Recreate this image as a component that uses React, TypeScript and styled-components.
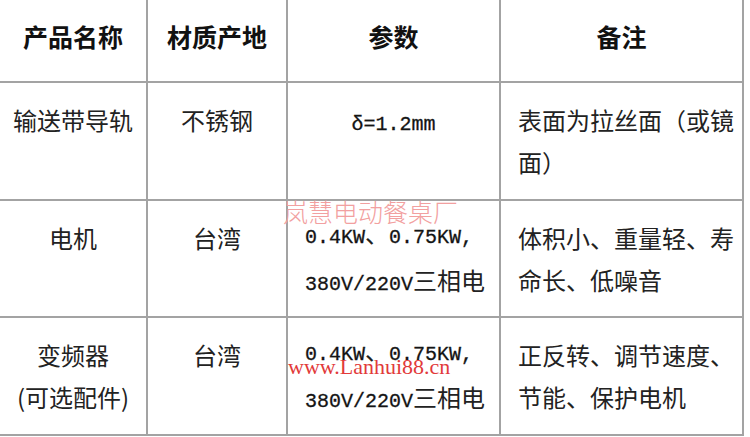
import React from "react";
import styled, { createGlobalStyle } from "styled-components";

const GlobalStyle = createGlobalStyle`
    html, body {
        margin: 0;
        padding: 0;
        background: #ffffff;
    }
    body {
        font-family: "Noto Sans CJK SC", "Noto Sans", sans-serif;
        color: #1e1e1e;
    }
`

const StyledSheet = styled.div`
    position: relative;
    width: 750px;
    height: 437px;
    overflow: hidden;
    background: #ffffff;
`

const StyledRow = styled.div<{ $h: number }>`
    display: grid;
    grid-template-columns: 148px 140px 213px 243px;
    height: ${(p) => p.$h}px;
`

const StyledCell = styled.div<{ $align?: "left" | "center"; $header?: boolean }>`
    box-sizing: border-box;
    display: flex;
    align-items: center;
    justify-content: ${(p) => (p.$align === "left" ? "flex-start" : "center")};
    padding: ${(p) => (p.$header ? "0 0 9px 0" : p.$align === "left" ? "0 0 0 17px" : "0")};
    border-right: 2px solid #a3a3a3;
    border-bottom: 2px solid #a3a3a3;
    font-size: ${(p) => (p.$header ? "25px" : "24px")};
    font-weight: ${(p) => (p.$header ? 700 : 400)};
    color: ${(p) => (p.$header ? "#111111" : "#222222")};
`

const StyledLines = styled.div<{ $align?: "left" | "center" }>`
    min-height: 84px;
    line-height: 42px;
    text-align: ${(p) => p.$align ?? "center"};
    white-space: nowrap;
`

const StyledParam = styled.span`
    font-family: "Liberation Mono", monospace;
    font-size: 20px;
    color: #141414;
    -webkit-text-stroke: 0.3px #141414;
`

const StyledHan = styled.span`
    font-family: "Noto Sans CJK SC", sans-serif;
    font-size: 24px;
    -webkit-text-stroke: 0;
    color: #222222;
`

const StyledWatermarkCn = styled.div`
    position: absolute;
    left: 283px;
    top: 199px;
    font-family: "Noto Sans CJK SC", sans-serif;
    font-weight: 300;
    font-size: 25px;
    line-height: 1;
    color: #f2a0a0;
    white-space: nowrap;
    pointer-events: none;
`

const StyledWatermarkUrl = styled.div`
    position: absolute;
    left: 288px;
    top: 356px;
    font-family: "Liberation Serif", serif;
    font-size: 22px;
    line-height: 1;
    color: #e23a3a;
    white-space: nowrap;
    pointer-events: none;
`

type Line = React.ReactNode;

interface RowData {
    h: number;
    name: Line[];
    origin: string;
    params: Line[];
    paramAlign: "left" | "center";
    notes: Line[];
}

const specLine1 = (
    <StyledParam>
        0.4KW<StyledHan>、</StyledHan>0.75KW,
    </StyledParam>
);

const specLine2 = (
    <StyledParam>
        380V/220V<StyledHan>三相电</StyledHan>
    </StyledParam>
);

const rows: RowData[] = [
    {
        h: 118,
        name: ["输送带导轨"],
        origin: "不锈钢",
        params: [<StyledParam>δ=1.2mm</StyledParam>],
        paramAlign: "center",
        notes: ["表面为拉丝面（或镜", "面）"],
    },
    {
        h: 117,
        name: ["电机"],
        origin: "台湾",
        params: [specLine1, specLine2],
        paramAlign: "left",
        notes: ["体积小、重量轻、寿", "命长、低噪音"],
    },
    {
        h: 118,
        name: ["变频器", "(可选配件)"],
        origin: "台湾",
        params: [specLine1, specLine2],
        paramAlign: "left",
        notes: ["正反转、调节速度、", "节能、保护电机"],
    },
];

const Lines = ({ lines, align }: { lines: Line[]; align?: "left" | "center" }) => (
    <StyledLines $align={align}>
        {lines.map((l, i) => (
            <div key={i}>{l}</div>
        ))}
    </StyledLines>
);

export default function App() {
    return (
        <>
            <GlobalStyle />
            <StyledSheet>
                <StyledRow $h={83}>
                    <StyledCell $header>产品名称</StyledCell>
                    <StyledCell $header>材质产地</StyledCell>
                    <StyledCell $header>参数</StyledCell>
                    <StyledCell $header>备注</StyledCell>
                </StyledRow>
                {rows.map((r, i) => (
                    <StyledRow $h={r.h} key={i}>
                        <StyledCell>
                            <Lines lines={r.name} />
                        </StyledCell>
                        <StyledCell>
                            <Lines lines={[r.origin]} />
                        </StyledCell>
                        <StyledCell $align={r.paramAlign}>
                            <Lines lines={r.params} align={r.paramAlign} />
                        </StyledCell>
                        <StyledCell $align="left">
                            <Lines lines={r.notes} align="left" />
                        </StyledCell>
                    </StyledRow>
                ))}
                <StyledWatermarkCn>岚慧电动餐桌厂</StyledWatermarkCn>
                <StyledWatermarkUrl>www.Lanhui88.cn</StyledWatermarkUrl>
            </StyledSheet>
        </>
    );
}
